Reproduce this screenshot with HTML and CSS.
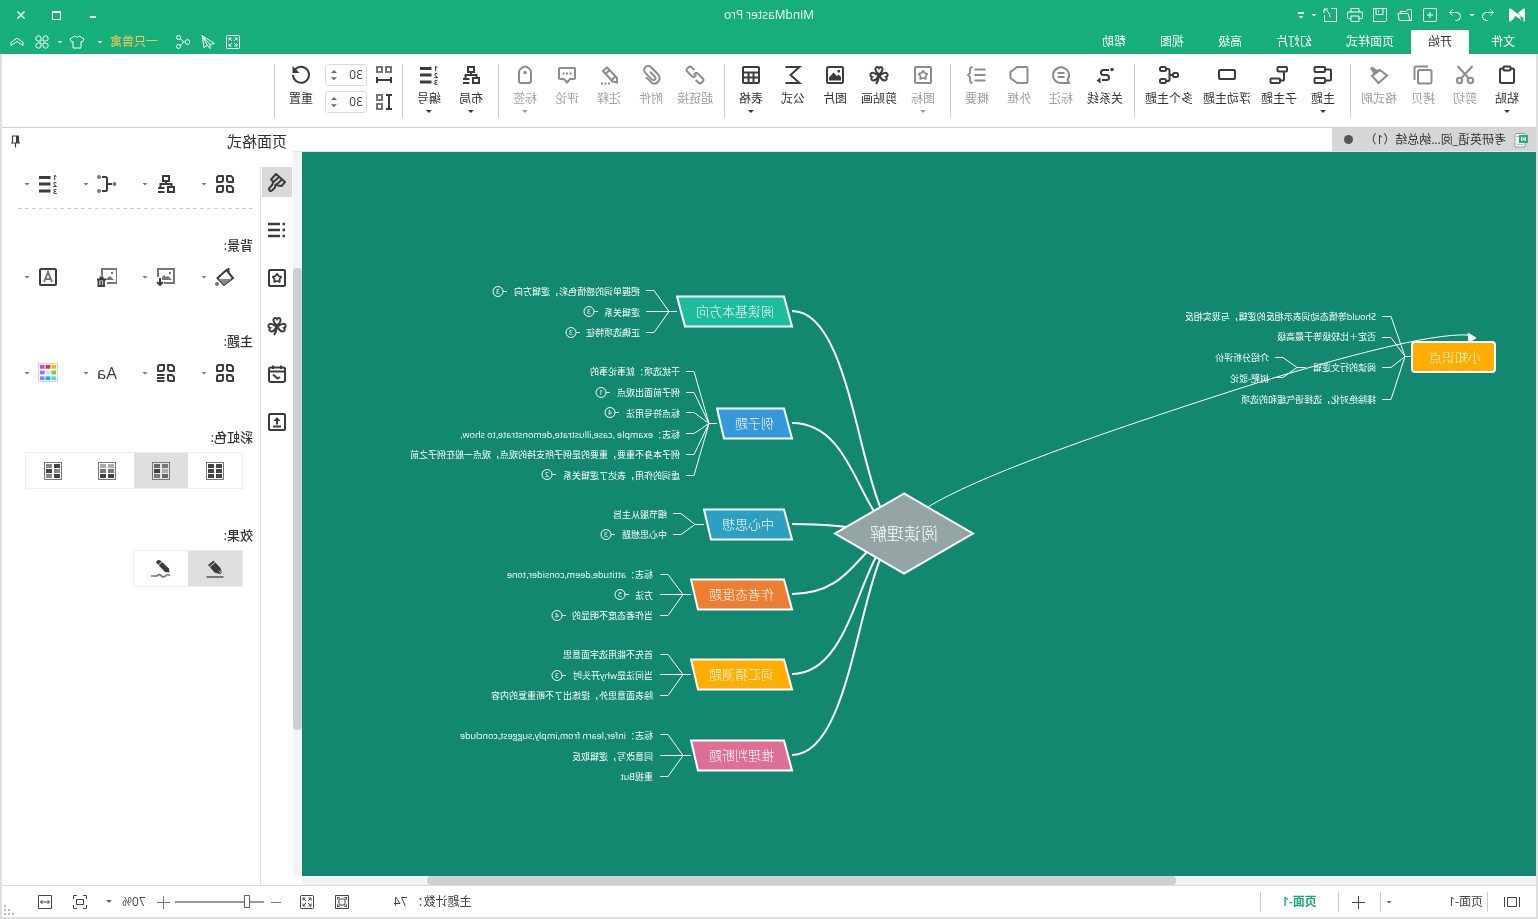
FILE: index.html
```html
<!DOCTYPE html>
<html lang="zh-CN">
<head>
<meta charset="utf-8">
<title>MindMaster Pro</title>
<link rel="stylesheet" href="styles.css">
</head>
<body>
<svg class="sprite" aria-hidden="true">
  <symbol id="logo" viewBox="0 0 16 14"><path d="M0 1.500Q0 0 1.500.6L7 5v0L4.500 7.500V11L1.500 13.600Q0 13.800 0 12.500zM16 1.500Q16 0 14.500.6L1.500 10v3.600L16 4zM10.500 7.500V10l4 3.600Q16 13.800 16 12.500V1.500z" fill="#fff"/></symbol>
  <symbol id="undo" viewBox="0 0 16 16"><path d="M5.500 2.500 2.500 5.500l3 3M2.500 5.500H9.500a4 4 0 0 1 0 8H8"/></symbol>
  <symbol id="redo" viewBox="0 0 16 16"><path d="M10.500 2.500l3 3-3 3M13.500 5.500H6.500a4 4 0 0 0 0 8H8"/></symbol>
  <symbol id="new" viewBox="0 0 16 16"><rect x="1.500" y="1.500" width="13" height="13" rx="1"/><path d="M8 5v6M5 8h6"/></symbol>
  <symbol id="open" viewBox="0 0 16 16"><path d="M1.500 13.500v-10a1 1 0 0 1 1-1h3l1.500 2h5a1 1 0 0 1 1 1v1M1.500 13.500h11.500a1 1 0 0 0 1-1L15 6.500H5L3 13"/></symbol>
  <symbol id="save" viewBox="0 0 16 16"><path d="M1.500 1.500h13v13h-12l-1-1zM5 2v5.500h7V2M9.500 3.500v2"/></symbol>
  <symbol id="print" viewBox="0 0 16 16"><path d="M4 5V1.500h8V5M4 11.500H1.500a1 1 0 0 1-1-1V6a1 1 0 0 1 1-1h13a1 1 0 0 1 1 1v4.500a1 1 0 0 1-1 1H12M4 9h8v5.500H4z"/></symbol>
  <symbol id="export" viewBox="0 0 16 16"><path d="M7 1.500H1.500v13h12V8M10 2l4 0v4M14 2C10 4 8.500 6 8 10"/></symbol>
  <symbol id="full" viewBox="0 0 16 16"><rect x="1.500" y="1.500" width="13" height="13" rx="1"/><path d="M4 6.500V4h2.500M4 4l3 3M9.500 4H12v2.500M12 4 9 7M4 9.500V12h2.500M4 12l3-3M12 9.500V12H9.500M12 12 9 9"/></symbol>
  <symbol id="send" viewBox="0 0 16 16"><path d="M14 1.500 1.500 9.500l4.500 1v4l2.500-3 3.500 2zM14 1.500 6 10.500M14 1.500 8.500 11.500"/></symbol>
  <symbol id="share" viewBox="0 0 16 16"><circle cx="3.500" cy="8" r="2.300"/><circle cx="12.500" cy="3.500" r="2"/><circle cx="12.500" cy="12.500" r="2"/><path d="M6 8h1l4-3.500M7 8l4 3.500"/></symbol>
  <symbol id="shirt" viewBox="0 0 16 16"><path d="M5.500 2 1 5l1.500 3 1.500-.5V14h8V7.500l1.500.5L15 5l-4.500-3Q8 4.500 5.500 2z"/></symbol>
  <symbol id="apps" viewBox="0 0 16 16"><path d="M7 7H4.200a2.600 2.600 0 1 1 2.800-2.800zM9 7h2.800A2.600 2.600 0 1 0 9 4.200zM7 9H4.200A2.600 2.600 0 1 0 7 11.800zM9 9h2.800A2.600 2.600 0 1 1 9 11.800z"/></symbol>
  <symbol id="up" viewBox="0 0 16 16"><path d="M2 8.500 8 4l6 4.500v3L8 7.500 2 11.500z"/></symbol>

  <symbol id="paste" viewBox="0 0 20 20"><rect x="3" y="3.500" width="14" height="14.500" rx="1.500"/><rect x="6.500" y="1.500" width="7" height="4" rx="1" fill="#fff"/></symbol>
  <symbol id="cut" viewBox="0 0 20 20"><path d="M2.500 1 13.500 13M17.500 1 6.500 13"/><circle cx="4.500" cy="15.500" r="2.700"/><circle cx="15.500" cy="15.500" r="2.700"/></symbol>
  <symbol id="copy" viewBox="0 0 20 20"><rect x="1.500" y="5" width="13.500" height="13.500" rx="1.500"/><path d="M5 1.500h12a1.500 1.500 0 0 1 1.500 1.500v12"/></symbol>
  <symbol id="brush" viewBox="0 0 20 20"><path d="M9 5 2 10.500 10.500 18 17 11z"/><path d="M8.500 6 18 12 15.500 8.500 19 3.500 17 1.500 12 5 9.500 4z" fill="currentColor" stroke="none"/></symbol>
  <symbol id="topic" viewBox="0 0 20 20"><rect x="8" y="2" width="10.500" height="5" rx="1"/><rect x="8" y="13" width="10.500" height="5" rx="1"/><path d="M8 4.500H3a1 1 0 0 0-1 1v9a1 1 0 0 0 1 1h5"/></symbol>
  <symbol id="sub" viewBox="0 0 20 20"><rect x="2" y="2" width="9.500" height="4.500" rx="1"/><rect x="9" y="13.500" width="9.500" height="4.500" rx="1"/><path d="M5 6.500v8a1 1 0 0 0 1 1h3"/></symbol>
  <symbol id="float" viewBox="0 0 20 20"><rect x="2" y="5" width="16" height="9" rx="1"/></symbol>
  <symbol id="multi" viewBox="0 0 20 20"><rect x="1" y="8" width="5" height="4" rx="1.500"/><rect x="13" y="2" width="6" height="4" rx="1.500"/><rect x="13" y="14" width="6" height="4" rx="1.500"/><path d="M6 10h4M13 4h-2a1.500 1.500 0 0 0-1.500 1.500v9A1.500 1.500 0 0 0 11 16h2"/></symbol>
  <symbol id="rel" viewBox="0 0 20 20"><path d="M6 5h5.500a2.500 2.500 0 0 1 0 5h-3a2.500 2.500 0 0 0 0 5H13"/><circle cx="3" cy="4.500" r="1.700" fill="currentColor" stroke="none"/><path d="M14.500 12.500 18.500 15.500l-4 3z" fill="currentColor" stroke="none"/></symbol>
  <symbol id="callout" viewBox="0 0 20 20"><path d="M10 18H2l1.500-3.200A8 7.800 0 1 1 10 18zM6.500 8h7M6.500 12h7"/></symbol>
  <symbol id="frame" viewBox="0 0 20 20"><path d="M1.500 3.500a1.500 1.500 0 0 1 1.500-1.500h9l6.500 5v6L12 18H3a1.500 1.500 0 0 1-1.500-1.500z"/></symbol>
  <symbol id="summary" viewBox="0 0 20 20"><path d="M1.500 4.500h11M1.500 10h11M1.500 15.500h11M14.500 2q2.500 0 2.500 2.500V8l2 2-2 2v3.500q0 2.500-2.500 2.500" stroke-width="1.800"/></symbol>
  <symbol id="mark" viewBox="0 0 20 20"><rect x="2" y="2" width="16" height="16" rx="1"/><path d="M10 5.800 11.600 8l2.600.9L12.600 11l.1 2.800L10 13l-2.700.8.1-2.800-1.600-2.100L8.400 8z" stroke-width="1.800" stroke-linejoin="round"/></symbol>
  <symbol id="clover" viewBox="0 0 20 20"><path d="M10 9.500C7 7 6 5.500 6.500 3.500 7 1.500 9.300 1.500 10 3c.7-1.500 3-1.500 3.500.5.500 2-.5 3.500-3.500 6zM9.500 10.500C8 14 6.500 15.500 4.500 15.500 2.500 15.500 1.500 13.500 3 12 1 11.500.8 9 2.500 8c2-1 4 .5 7 2.500zM10.500 10.500c1.500 3.500 3 5 5 5 2 0 3-2 1.500-3.500 2-.5 2.200-3 .5-4-2-1-4 .5-7 2.500zM10 10.500Q10.500 16 13 19"/></symbol>
  <symbol id="pic" viewBox="0 0 20 20"><rect x="2" y="2" width="16" height="16" rx="1.500"/><path d="M4 15.500v-3.500l2.500-2.500L8 11l3.500-3.500 4.500 5v3zM5 5h2.500v2.500H5z" fill="currentColor" stroke="none"/></symbol>
  <symbol id="sigma" viewBox="0 0 20 20"><path d="M17.500 2H3.500l9 8-9 8h14"/></symbol>
  <symbol id="table" viewBox="0 0 20 20"><rect x="2" y="2" width="16" height="16" rx="1"/><path d="M2 7.500h16M2 12.500h16M7.500 7.500V18M12.500 7.500V18"/></symbol>
  <symbol id="link" viewBox="0 0 20 20"><g transform="rotate(-45 10 10)"><path d="M6 13H2a2 2 0 0 1-2-2V9a2 2 0 0 1 2-2h7a2 2 0 0 1 2 2v2"/><path d="M14 7h4a2 2 0 0 1 2 2v2a2 2 0 0 1-2 2h-7a2 2 0 0 1-2-2V9"/></g></symbol>
  <symbol id="clip" viewBox="0 0 20 20"><path d="M8.500 7v7a2 2 0 0 0 4 0V4.500a4 4 0 0 0-8 0V14a5.500 5.500 0 0 0 10.500 2.500V8" transform="rotate(45 10 10)"/></symbol>
  <symbol id="pencil" viewBox="0 0 20 20"><path d="M2 17.500v-4.500L12 2.500l4 3.500L6.500 16.500zM9.500 5l4 4M4 12l3.500 3" /><path d="M9 18.500h10" stroke-dasharray="2 1.500"/></symbol>
  <symbol id="comment" viewBox="0 0 20 20"><path d="M3 3h14a1 1 0 0 1 1 1v9a1 1 0 0 1-1 1h-4l-3 3.500L7 14H3a1 1 0 0 1-1-1V4a1 1 0 0 1 1-1z"/><path d="M5.500 8.500h9" stroke-dasharray="2 1.500"/></symbol>
  <symbol id="tag" viewBox="0 0 20 20"><path d="M4 7q0-2 2-3.500L8 2.200Q10 1 12 2.200l2 1.300q2 1.500 2 3.500V16a2 2 0 0 1-2 2H6a2 2 0 0 1-2-2z"/><circle cx="10" cy="7.500" r="1.700" fill="currentColor" stroke="none"/></symbol>
  <symbol id="layout" viewBox="0 0 20 20"><rect x="7" y="2" width="6" height="5"/><path d="M10 7v3M4.500 13v-3h11v3M11.500 14H18M11.500 18H18"/><rect x="2" y="13" width="6" height="5"/></symbol>
  <symbol id="hspace" viewBox="0 0 20 20"><g stroke="#777"><rect x="3" y="2" width="5" height="5"/><rect x="12" y="2" width="5" height="5"/></g><path d="M2 15h16M3 12v6M17 12v6"/></symbol>
  <symbol id="vspace" viewBox="0 0 20 20"><path d="M5 3v14M2 3h6M2 17h6"/><g stroke="#777"><rect x="12" y="3" width="5" height="5"/><rect x="12" y="12" width="5" height="5"/></g></symbol>
  <symbol id="reset" viewBox="0 0 20 20"><path d="M16 4.500A8 8 0 1 0 18 10"/><path d="M18.500 1v7H11.500z" fill="currentColor" stroke="none"/></symbol>

  <symbol id="doc" viewBox="0 0 16 16"><path d="M4 1.500h9l1 1V15H4z" fill="#fff" stroke="#999"/><path d="M6 12.500h6M9 4.500h4" stroke="#bbb"/><rect x="1" y="3" width="9" height="8" fill="#1cb57e" stroke="none"/><path d="M3.500 9V5l4 4V5l-4 4" stroke="#fff" stroke-width="1"/></symbol>
  <symbol id="pin" viewBox="0 0 12 14"><path d="M2.500 2h6v7h-6zM1 9h9M5.500 9v4.500" stroke-width="1.200"/><path d="M2 2h3v7H2z" fill="currentColor" stroke="none"/></symbol>
  <symbol id="paint" viewBox="0 0 20 20"><path d="M11 2 2 10l3.500 4 3.500-.5 2.500-1 .5 3 3 3q1.500 1 2.500 0 1-1.500 0-2.500l-3-3.500-.5-3 2-2zM5 7.500l6 5.500M8 5l6.500 6" stroke-linejoin="round"/></symbol>
  <symbol id="list" viewBox="0 0 20 20"><path d="M7 4h12M7 10h12M7 16h12M2 4h2.500M2 10h2.500M2 16h2.500" stroke-width="2.600"/></symbol>
  <symbol id="cal" viewBox="0 0 20 20"><rect x="2" y="3.500" width="16" height="14.500" rx="2"/><path d="M2 7.500h16M6 1.500V5M14 1.500V5M7 13l2.500 1.500L14 10.500"/></symbol>
  <symbol id="upload" viewBox="0 0 20 20"><rect x="2" y="2" width="16" height="16" rx="1"/><path d="M10 12.500V7M6 14.500h8"/><path d="M6.500 9 10 5l3.500 4z" fill="currentColor" stroke="none"/></symbol>
  <symbol id="four" viewBox="0 0 20 20"><path d="M4 2h4v4a2 2 0 0 1-2 2H2V4zM12 2h4a2 2 0 0 1 2 2v4h-4a2 2 0 0 1-2-2zM4 12h4v4a2 2 0 0 1-2 2H2v-4zM12 12h4a2 2 0 0 1 2 2v4h-4a2 2 0 0 1-2-2z" stroke-linejoin="round"/></symbol>
  <symbol id="fourlist" viewBox="0 0 20 20"><path d="M4 2h4v4a2 2 0 0 1-2 2H2V4zM12 2h4a2 2 0 0 1 2 2v4h-4a2 2 0 0 1-2-2zM4 12h4v4a2 2 0 0 1-2 2H2v-4z" stroke-linejoin="round"/><path d="M11.500 12h7.500M11.500 15h7.500M11.500 18h7.500"/></symbol>
  <symbol id="conn" viewBox="0 0 20 20"><path d="M5 10h4.500M15 3h-3.500A1.500 1.500 0 0 0 10 4.500v11a1.500 1.500 0 0 0 1.500 1.500H15"/><g fill="#777" stroke="none"><circle cx="2.500" cy="10" r="2"/><circle cx="18" cy="3" r="2"/><circle cx="18" cy="17" r="2"/></g></symbol>
  <symbol id="fill" viewBox="0 0 20 20"><path d="M2 11 11 18l6.500-7L8.500 3z"/><path d="M3.500 12h13L11 18z" fill="#888" stroke="none"/><path d="M6.500 1v4"/><circle cx="18" cy="17" r="2" fill="#777" stroke="none"/></symbol>
  <symbol id="imgdown" viewBox="0 0 20 20"><g stroke="#777"><path d="M12 16H2V2h16v8"/><path d="M4 13l4-4 2 1 2-2 2 2v3zM5 5h2v2H5z" fill="#777" stroke="none"/></g><path d="M16 11v6M13 15l3 3 3-3"/></symbol>
  <symbol id="imgdel" viewBox="0 0 20 20"><g stroke="#777"><path d="M10 16H0V2h15v7"/><path d="M3 13l4-4 4 3v1zM4 5h2v2H4z" fill="#777" stroke="none"/></g><path d="M11 12.500h9M13.500 10.500h4M13 12.500V19h5.500v-6.500M15.700 14v4" stroke-width="1.800"/></symbol>
  <symbol id="abox" viewBox="0 0 20 20"><rect x="2" y="2" width="16" height="16" rx="1"/><path d="M6 15l4-10 4 10M7.500 12h5" stroke="#777"/></symbol>
  <symbol id="palette" viewBox="0 0 21 21"><rect x=".5" y=".5" width="20" height="19" fill="#fff" stroke="#c9cfe6" stroke-width="1"/><g stroke="none"><path fill="#f0bf00" d="M2 2h5v4H2z"/><path fill="#dd2f55" d="M8 2h5v4H8z"/><path fill="#c052d0" d="M14 2h5v4h-5z"/><path fill="#76cf3c" d="M2 8h5v4H2z"/><path fill="#ddd" d="M8 8h5v4H8z"/><path fill="#9578ee" d="M14 8h5v4h-5z"/><path fill="#68ccdc" d="M2 14h5v4H2z"/><path fill="#00b8f5" d="M8 14h5v4H8z"/><path fill="#7d89f5" d="M14 14h5v4h-5z"/></g></symbol>
  <symbol id="rb1" viewBox="0 0 18 18"><rect x=".5" y=".5" width="17" height="17" fill="#fff" stroke="#777" stroke-width="1"/><path fill="#444" stroke="none" d="M2 2h6v4H2zM10 2h6v4h-6zM2 7h6v4H2zM10 7h6v4h-6zM2 12h6v4H2zM10 12h6v4h-6z"/></symbol>
  <symbol id="rb2" viewBox="0 0 18 18"><rect x=".5" y=".5" width="17" height="17" fill="#e4e4e4" stroke="#777" stroke-width="1"/><g stroke="none"><path fill="#777" d="M2 2h6v4H2zM10 12h6v4h-6z"/><path fill="#666" d="M10 2h6v4h-6zM2 12h6v4H2z"/><path fill="#aaa" d="M2 7h6v4H2z"/><path fill="#444" d="M10 7h6v4h-6z"/></g></symbol>
  <symbol id="rb3" viewBox="0 0 18 18"><rect x=".5" y=".5" width="17" height="17" fill="#fff" stroke="#777" stroke-width="1"/><g stroke="none"><path fill="#aaa" d="M2 2h6v4H2zM10 2h6v4h-6z"/><path fill="#777" d="M2 7h6v4H2zM10 7h6v4h-6z"/><path fill="#444" d="M2 12h6v4H2zM10 12h6v4h-6z"/></g></symbol>
  <symbol id="rb4" viewBox="0 0 18 18"><rect x=".5" y=".5" width="17" height="17" fill="#fff" stroke="#777" stroke-width="1"/><g stroke="none"><path fill="#444" d="M2 2h6v4H2zM10 7h6v4h-6zM2 12h6v4H2z"/><path fill="#888" d="M10 2h6v4h-6zM2 7h6v4H2zM10 12h6v4h-6z"/></g></symbol>
  <symbol id="pen1" viewBox="0 0 20 20"><path d="M1.500 18h17" stroke="#777"/><path d="M3 14.500 4.500 9l7-7.500 5.500 4.500-6.500 7.500-5.500 1.500z" fill="currentColor" stroke="none"/><path d="M9.500 3l6 5M3 15l3-3.500" stroke="#ddd" stroke-width="1"/></symbol>
  <symbol id="pen2" viewBox="0 0 20 20"><path d="M1 17q2-3 4.500 0 3 2 4.500-.500 2-2 4 .500H20" stroke="#777" stroke-width="1.700"/><path d="M1.500 13.500 2 9.500 10.500 1.500q3.500-1.500 4.500 2L6 13z" fill="currentColor" stroke="none"/><path d="M9 2.500l4.500 4.500" stroke="#fff" stroke-width="1"/></symbol>

  <symbol id="pages" viewBox="0 0 16 16"><path d="M.5 3v10M15.500 3v10M3.500 3.500h9v9h-9z"/></symbol>
  <symbol id="plus" viewBox="0 0 14 14"><path d="M7.500 1v13M1 7.500h13"/></symbol>
  <symbol id="minus" viewBox="0 0 14 14"><path d="M2 7.500h10"/></symbol>
  <symbol id="fitpage" viewBox="0 0 16 16"><path d="M1.500 1.500h13v13h-13zM5 5h6v6H5zM3.500 5.500v-2h2M10.500 3.500h2v2M12.500 10.500v2h-2M5.500 12.500h-2v-2"/></symbol>
  <symbol id="focus" viewBox="0 0 16 16"><path d="M1.500 5V1.500H5M11 1.500h3.500V5M14.500 11v3.500H11M5 14.500H1.500V11M4.500 5.500h7v5h-7z"/></symbol>
  <symbol id="fitw" viewBox="0 0 16 16"><path d="M1.500 1.500h13v13h-13zM3.500 8h9M5.500 6l-2 2 2 2M10.500 6l2 2-2 2"/></symbol>
</svg>

<div class="app">
  <header class="header">
    <div class="titlebar">
      <div class="quick">
        <svg class="logo"><use href="#logo"/></svg>
        <button class="qbtn" aria-label="撤销"><svg class="i16"><use href="#undo"/></svg></button>
        <button class="cbtn" aria-label="撤销列表"><i class="caret"></i></button>
        <button class="qbtn" aria-label="重做"><svg class="i16"><use href="#redo"/></svg></button>
        <button class="qbtn" aria-label="新建"><svg class="i16"><use href="#new"/></svg></button>
        <button class="qbtn" aria-label="打开"><svg class="i16"><use href="#open"/></svg></button>
        <button class="qbtn" aria-label="保存"><svg class="i16"><use href="#save"/></svg></button>
        <button class="qbtn" aria-label="打印"><svg class="i16"><use href="#print"/></svg></button>
        <button class="qbtn" aria-label="导出"><svg class="i16"><use href="#export"/></svg></button>
        <button class="cbtn" aria-label="导出选项"><i class="caret"></i></button>
        <button class="custom" aria-label="自定义"><i class="bar"></i><i class="caret"></i></button>
      </div>
      <h1 class="title">MindMaster Pro</h1>
      <div class="winctl">
        <button aria-label="最小化"><i class="min"></i></button>
        <button aria-label="最大化"><i class="max"></i></button>
        <button aria-label="关闭"><svg class="i10" viewBox="0 0 10 10"><path d="M1.500 1.500l7 7M8.500 1.500l-7 7" stroke-width="1.500"/></svg></button>
      </div>
    </div>
    <div class="menubar">
      <nav class="tabs">
        <button class="tab file">文件</button><button class="tab active">开始</button><button class="tab">页面样式</button><button class="tab">幻灯片</button><button class="tab">高级</button><button class="tab">视图</button><button class="tab">帮助</button>
      </nav>
      <div class="account">
        <button class="qbtn" aria-label="全屏"><svg class="i16"><use href="#full"/></svg></button>
        <button class="qbtn" aria-label="发送"><svg class="i16"><use href="#send"/></svg></button>
        <button class="qbtn" aria-label="分享"><svg class="i16"><use href="#share"/></svg></button>
        <button class="user">一只兽禽</button>
        <button class="cbtn wide" aria-label="账户"><i class="caret"></i></button>
        <button class="qbtn" aria-label="皮肤"><svg class="i16"><use href="#shirt"/></svg></button>
        <button class="cbtn mid" aria-label="皮肤选项"><i class="caret"></i></button>
        <button class="qbtn" aria-label="应用"><svg class="i16"><use href="#apps"/></svg></button>
        <button class="qbtn" aria-label="收起"><svg class="i16"><use href="#up"/></svg></button>
      </div>
    </div>
  </header>

  <div class="frame">
    <section class="ribbon">
      <div class="group">
        <button class="tool"><svg><use href="#paste"/></svg><span>粘贴</span><i class="caret"></i></button>
        <button class="tool off"><svg><use href="#cut"/></svg><span>剪切</span></button>
        <button class="tool off"><svg><use href="#copy"/></svg><span>拷贝</span></button>
        <button class="tool off"><svg><use href="#brush"/></svg><span>格式刷</span></button>
      </div>
      <div class="group">
        <button class="tool"><svg><use href="#topic"/></svg><span>主题</span><i class="caret"></i></button>
        <button class="tool"><svg><use href="#sub"/></svg><span>子主题</span></button>
        <button class="tool"><svg><use href="#float"/></svg><span>浮动主题</span></button>
        <button class="tool"><svg><use href="#multi"/></svg><span>多个主题</span></button>
      </div>
      <div class="group">
        <button class="tool"><svg><use href="#rel"/></svg><span>关系线</span></button>
        <button class="tool off"><svg><use href="#callout"/></svg><span>标注</span></button>
        <button class="tool off"><svg><use href="#frame"/></svg><span>外框</span></button>
        <button class="tool off"><svg><use href="#summary"/></svg><span>概要</span></button>
      </div>
      <div class="group">
        <button class="tool off"><svg><use href="#mark"/></svg><span>图标</span><i class="caret"></i></button>
        <button class="tool"><svg><use href="#clover"/></svg><span>剪贴画</span></button>
        <button class="tool"><svg><use href="#pic"/></svg><span>图片</span></button>
        <button class="tool"><svg><use href="#sigma"/></svg><span>公式</span></button>
        <button class="tool"><svg><use href="#table"/></svg><span>表格</span><i class="caret"></i></button>
      </div>
      <div class="group">
        <button class="tool off"><svg><use href="#link"/></svg><span>超链接</span></button>
        <button class="tool off"><svg><use href="#clip"/></svg><span>附件</span></button>
        <button class="tool off"><svg><use href="#pencil"/></svg><span>注释</span></button>
        <button class="tool off"><svg><use href="#comment"/></svg><span>评论</span></button>
        <button class="tool off"><svg><use href="#tag"/></svg><span>标签</span><i class="caret"></i></button>
      </div>
      <div class="group">
        <button class="tool"><svg><use href="#layout"/></svg><span>布局</span><i class="caret"></i></button>
        <button class="tool"><svg class="number" viewBox="0 0 20 20"><path d="M7.500 3.500H19M7.500 10H19M7.500 17H19" stroke-width="3"/><text x="1" y="6">1</text><text x="1" y="13">2</text><text x="1" y="20">3</text></svg><span>编号</span><i class="caret"></i></button>
      </div>
      <div class="group">
        <div class="spacing">
          <label for="hs"><svg><use href="#hspace"/></svg></label>
          <div class="spin"><input id="hs" type="text" value="30" aria-label="水平间距"><span class="arrows"><button aria-label="增加"><i class="caret flip"></i></button><button aria-label="减少"><i class="caret"></i></button></span></div>
          <label for="vs"><svg><use href="#vspace"/></svg></label>
          <div class="spin"><input id="vs" type="text" value="30" aria-label="垂直间距"><span class="arrows"><button aria-label="增加"><i class="caret flip"></i></button><button aria-label="减少"><i class="caret"></i></button></span></div>
        </div>
        <button class="tool"><svg><use href="#reset"/></svg><span>重置</span></button>
      </div>
    </section>

    <main class="work">
      <section class="editor">
        <div class="docs">
          <button class="doc"><svg class="i16"><use href="#doc"/></svg><span>考研英语_阅...纳总结（1）</span><i class="dot"></i></button>
        </div>
        <div class="canvas-row">
          <div class="canvas">
            <svg class="map" aria-label="阅读理解">
              <g class="curve">
                <path d="M632 381C677 381 677 159 744 159"/>
                <path d="M632 381C677 381 677 271 744 271"/>
                <path d="M632 381C677 381 677 372 744 372"/>
                <path d="M632 381C677 381 677 442 744 442"/>
                <path d="M632 381C677 381 677 522 744 522"/>
                <path d="M632 381C677 381 677 603 744 603"/>
              </g>
              <g class="wire">
                <path d="M859 159.500H890M890 138.500H882L867 159.500 882 180.500H890"/>
                <path d="M819 271.500H827L842 219.500H850M827 271.500 842 240.500H850M827 271.500 842 260.500H850M827 271.500 842 281.500H850M827 271.500 842 302.500H850M827 271.500 842 323.500H850"/>
                <path d="M832 372.500H841L855 361.500H863M841 372.500 855 382.500H863"/>
                <path d="M845 442.500H876M876 422.500H868L853 442.500 868 463.500H876"/>
                <path d="M845 522.500H876M876 502.500H868L853 522.500 868 543.500H876"/>
                <path d="M845 603.500H876M876 582.500H868L853 603.500 868 624.500H876"/>
                <path d="M124 204.500H131L145 164.500H154M131 204.500 145 185.500H154M131 204.500 145 215.500H154M131 204.500 145 247.500H154"/>
                <path d="M230 215.500H239L253 205.500H261M239 215.500 253 225.500H261"/>
                <path d="M1029 139.500h4M938 159.500h4M956 180.500h4M926 240.500h4M917 260.500h4M980 322.500h4M921 382.500h4M907 442.500h4M970 463.500h4M970 523.500h4"/>
              </g>
              <g class="shape">
                <path fill="#95a5a6" d="M632 341.500 701 381.500 632 421.500 563 381.500z"/>
                <path fill="#1cbc9c" d="M752 144.500H859L851 174.500H744z"/>
                <path fill="#3498db" d="M752 256.500H819L812 286.500H744z"/>
                <path fill="#2ba0c0" d="M752 357.500H832L825 387.500H744z"/>
                <path fill="#ed7d31" d="M752 427.500H845L838 457.500H744z"/>
                <path fill="#ffae00" d="M752 507.500H845L838 537.500H744z"/>
                <path fill="#dd6f97" d="M752 588.500H845L838 618.500H744z"/>
                <rect fill="#ffae00" x="41" y="190" width="83" height="30" rx="3"/>
              </g>
              <g class="wire">
                <path d="M608 355C561 326 446 284 276 230 196 206 106 181 68 183"/>
                <path class="solid" d="M68 181 60 186 67 190z"/>
              </g>
              <text class="root" x="632" y="388">阅读理解</text>
              <g class="main">
                <text x="762" y="164">阅读基本方向</text>
                <text x="762" y="276">例子题</text>
                <text x="762" y="377">中心思想</text>
                <text x="762" y="447">作者态度题</text>
                <text x="762" y="527">词汇猜测题</text>
                <text x="762" y="608">推理判断题</text>
                <text x="55" y="210">小知识点</text>
              </g>
              <g class="leaf">
                <text x="896" y="143">把握单词的感情色彩，逻辑方向</text>
                <text x="896" y="164">逻辑关系</text>
                <text x="896" y="184">正确选项特征</text>
                <text x="856" y="223">干扰选项：就事论事的</text>
                <text x="856" y="244">例子前面出观点</text>
                <text x="856" y="265">标点符号用法</text>
                <text x="856" y="286">标志：example ,case,illustrate,demonstrate,to show,</text>
                <text x="856" y="306">例子本身不重要，重要的是例子所支持的观点，观点一般在例子之前</text>
                <text x="856" y="327">虚词的作用，表达了逻辑关系</text>
                <text x="869" y="366">细节服从主旨</text>
                <text x="869" y="386">中心思想题</text>
                <text x="883" y="426">标志：attitude,deem,consider,tone</text>
                <text x="883" y="447">方法</text>
                <text x="883" y="467">当作者态度不明显的</text>
                <text x="883" y="506">首先不能用选字面意思</text>
                <text x="883" y="527">当问法是why开头时</text>
                <text x="883" y="547">除表面意思外，提炼出了不断重复的内容</text>
                <text x="883" y="587">标志：infer,learn from,imply,suggest,conclude</text>
                <text x="883" y="608">同意改写，逻辑取反</text>
                <text x="883" y="628">重视But</text>
                <text x="160" y="168">Should等情态动词表示相反的逻辑，与现实相反</text>
                <text x="160" y="188">否定＋比较级等于最高级</text>
                <text x="160" y="219">阅读的行文逻辑</text>
                <text x="160" y="251">排除绝对化，选择语气缓和的选项</text>
                <text x="267" y="209">介绍分析评价</text>
                <text x="267" y="230">树靶-驳论</text>
              </g>
              <g class="badge">
                <circle cx="1038" cy="139.500" r="5"/><text x="1038" y="142">3</text>
                <circle cx="947" cy="159.500" r="5"/><text x="947" y="162">3</text>
                <circle cx="965" cy="180.500" r="5"/><text x="965" y="183">3</text>
                <circle cx="935" cy="240.500" r="5"/><text x="935" y="243">1</text>
                <circle cx="926" cy="260.500" r="5"/><text x="926" y="263">4</text>
                <circle cx="989" cy="322.500" r="5"/><text x="989" y="325">2</text>
                <circle cx="930" cy="382.500" r="5"/><text x="930" y="385">3</text>
                <circle cx="916" cy="442.500" r="5"/><text x="916" y="445">5</text>
                <circle cx="979" cy="463.500" r="5"/><text x="979" y="466">4</text>
                <circle cx="979" cy="523.500" r="5"/><text x="979" y="526">3</text>
              </g>
            </svg>
          </div>
          <div class="vscroll"><div class="vthumb"></div></div>
        </div>
        <div class="hscroll"><div class="hthumb"></div></div>
      </section>

      <aside class="panel">
        <div class="panel-head"><h2>页面格式</h2><button aria-label="固定"><svg class="pin"><use href="#pin"/></svg></button></div>
        <div class="panel-body">
          <nav class="strip">
            <button class="on" aria-label="页面格式"><svg><use href="#paint"/></svg></button>
            <button aria-label="大纲"><svg><use href="#list"/></svg></button>
            <button aria-label="图标"><svg><use href="#mark"/></svg></button>
            <button aria-label="剪贴画"><svg><use href="#clover"/></svg></button>
            <button aria-label="任务"><svg><use href="#cal"/></svg></button>
            <button aria-label="导出"><svg><use href="#upload"/></svg></button>
          </nav>
          <div class="props">
            <div class="prow first">
              <button aria-label="布局"><svg><use href="#four"/></svg><i class="caret"></i></button>
              <button aria-label="结构"><svg><use href="#layout"/></svg><i class="caret"></i></button>
              <button aria-label="连接线"><svg><use href="#conn"/></svg><i class="caret"></i></button>
              <button aria-label="编号"><svg class="number" viewBox="0 0 20 20"><path d="M7.500 3.500H19M7.500 10H19M7.500 17H19" stroke-width="3"/><text x="1" y="6">1</text><text x="1" y="13">2</text><text x="1" y="20">3</text></svg><i class="caret"></i></button>
            </div>
            <h3>背景:</h3>
            <div class="prow">
              <button aria-label="填充"><svg><use href="#fill"/></svg><i class="caret"></i></button>
              <button aria-label="背景图片"><svg><use href="#imgdown"/></svg><i class="caret"></i></button>
              <button aria-label="删除图片"><svg class="wide"><use href="#imgdel"/></svg></button>
              <button aria-label="水印"><svg><use href="#abox"/></svg><i class="caret"></i></button>
            </div>
            <h3>主题:</h3>
            <div class="prow">
              <button aria-label="主题"><svg><use href="#four"/></svg><i class="caret"></i></button>
              <button aria-label="主题样式"><svg><use href="#fourlist"/></svg><i class="caret"></i></button>
              <button aria-label="字体"><span class="aa">Aa</span><i class="caret"></i></button>
              <button aria-label="颜色"><svg><use href="#palette"/></svg><i class="caret"></i></button>
            </div>
            <h3>彩虹色:</h3>
            <div class="seg">
              <button aria-label="单色"><svg><use href="#rb1"/></svg></button>
              <button class="on" aria-label="彩虹一"><svg><use href="#rb2"/></svg></button>
              <button aria-label="彩虹二"><svg><use href="#rb3"/></svg></button>
              <button aria-label="彩虹三"><svg><use href="#rb4"/></svg></button>
            </div>
            <h3 class="last">效果:</h3>
            <div class="seg">
              <button class="on" aria-label="常规"><svg class="pen"><use href="#pen1"/></svg></button>
              <button aria-label="手绘"><svg class="pen"><use href="#pen2"/></svg></button>
            </div>
          </div>
        </div>
      </aside>
    </main>

    <footer class="status">
      <button class="sbtn pages" aria-label="页面列表"><svg class="i16"><use href="#pages"/></svg></button>
      <div class="pagesel"><select aria-label="页面"><option>页面-1</option></select><i class="caret"></i></div>
      <button class="sbtn add" aria-label="添加页面"><svg class="i14"><use href="#plus"/></svg></button>
      <button class="pagetab">页面-1</button>
      <div class="right">
        <span class="count"><span>主题计数：</span><span>74</span></span>
        <button class="sbtn" aria-label="适合页面"><svg class="i16"><use href="#fitpage"/></svg></button>
        <button class="sbtn" aria-label="全屏"><svg class="i16"><use href="#full"/></svg></button>
        <button class="sbtn zoom out" aria-label="缩小"><svg class="i14"><use href="#minus"/></svg></button>
        <input class="slider" type="range" min="0" max="100" value="16" aria-label="缩放">
        <button class="sbtn zoom" aria-label="放大"><svg class="i14"><use href="#plus"/></svg></button>
        <button class="percent">70%<i class="caret"></i></button>
        <button class="sbtn" aria-label="居中"><svg class="i16"><use href="#focus"/></svg></button>
        <button class="sbtn" aria-label="适合宽度"><svg class="i16"><use href="#fitw"/></svg></button>
      </div>
      <svg class="grip" viewBox="0 0 10 10"><path d="M8 0h2v2H8zM8 4h2v2H8zM8 8h2v2H8zM4 4h2v2H4zM4 8h2v2H4zM0 8h2v2H0z"/></svg>
    </footer>
  </div>
</div>
</body>
</html>
```
FILE: styles.css
```css
* { box-sizing: border-box; }
html, body { height: 100%; }
body {
  margin: 0;
  overflow: hidden;
  color: #333;
  font-family: "Open Sans", "Noto Sans CJK SC", sans-serif;
  font-size: 12px;
  line-height: 16px;
}
button, input, select { font: inherit; color: inherit; }
button {
  display: flex;
  align-items: center;
  justify-content: center;
  margin: 0;
  padding: 0;
  border: 0;
  background: none;
  white-space: nowrap;
}
h1, h2, h3 { margin: 0; font-weight: 400; }
svg { display: block; flex: none; width: 20px; height: 20px; fill: none; stroke: currentColor; stroke-width: 2; }
.sprite { position: absolute; width: 0; height: 0; }
.i16 { width: 16px; height: 16px; stroke-width: 1; }
.i14 { width: 14px; height: 14px; stroke-width: 1; }
.i10 { width: 10px; height: 10px; }
.number { overflow: visible; }
.number text { fill: currentColor; stroke: none; font-size: 7px; font-weight: 700; }
.caret {
  flex: none;
  width: 6px;
  height: 3px;
  background: currentColor;
  clip-path: polygon(0 0, 100% 0, 50% 100%);
}
.flip { transform: rotate(180deg); }

/* The whole window is shown mirrored. */
.app { display: flex; flex-direction: column; height: 100%; transform: scaleX(-1); background: #fff; }

/* Header */
.header { background: #16ae79; color: #fff; }
.titlebar { display: grid; grid-template-columns: 1fr auto 1fr; align-items: center; height: 30px; }
.quick { display: flex; align-items: center; padding-left: 13px; }
.logo { width: 16px; height: 14px; margin-right: 8px; stroke: none; }
.qbtn { width: 25px; height: 24px; }
.cbtn { width: 8px; height: 24px; }
.custom { flex-direction: column; gap: 2px; width: 18px; height: 24px; }
.bar { width: 6px; height: 2px; background: #fff; }
.title { font-size: 12px; }
.winctl { display: flex; justify-content: flex-end; padding-right: 3px; }
.winctl button { width: 36px; height: 28px; }
.min { width: 6px; height: 2px; margin-top: 4px; background: #fff; }
.max { width: 9px; height: 9px; border: 1px solid #fff; border-top-width: 2px; }
.menubar { display: flex; justify-content: space-between; height: 24px; }
.tabs { display: flex; }
.tab { padding: 0 17px; }
.tab.file { margin-left: 6px; margin-right: 5px; }
.tab.active { background: #fff; color: #333; }
.account { display: flex; align-items: center; padding-right: 5px; }
.user { margin-left: 12px; color: #f9c95a; }
.cbtn.mid { width: 10px; }
.cbtn.wide { width: 20px; }

/* Window frame */
.frame { display: flex; flex: 1; flex-direction: column; min-height: 0; border: solid #dedede; border-width: 0 2px 2px; }

/* Ribbon */
.ribbon { display: flex; flex: none; height: 74px; padding: 10px 0 9px 2px; border-bottom: 1px solid #d0d0d0; color: #3c3c3c; }
.group { display: flex; padding: 0 5px 0 6px; border-right: 1px solid #d0d0d0; }
.tool { flex-direction: column; justify-content: flex-start; padding: 1px 5px 0; min-width: 42px; }
.tool span { margin-top: 6px; color: #333; }
.tool .caret { margin-top: 3px; }
.tool.off, .tool.off span { color: #a0a0a0; }
.tool.off svg { color: #8c8c8c; }
.spacing { display: grid; grid-template-columns: 20px 42px; grid-auto-rows: 22px; gap: 5px 7px; align-items: center; align-content: start; padding: 0 3px 0 2px; }
.spin { display: flex; height: 22px; padding: 0 5px 0 3px; border: 1px solid #ddd; border-radius: 3px; }
.spin input { flex: 1; min-width: 0; padding: 0; border: 0; outline: 0; background: none; }
.arrows { display: flex; flex-direction: column; justify-content: space-evenly; color: #666; }

/* Work area */
.work { display: flex; flex: 1; min-height: 0; }
.editor { display: flex; flex: 1; flex-direction: column; min-width: 0; }
.docs { display: flex; flex: none; height: 24px; border-bottom: 1px solid #e2e2e2; }
.doc { gap: 7px; width: 204px; padding: 0 12px 0 7px; background: #d6d6d6; justify-content: flex-start; }
.dot { width: 9px; height: 9px; margin-left: auto; border-radius: 50%; background: #555; }
.canvas-row { display: flex; flex: 1; min-height: 0; }
.canvas { flex: 1; min-width: 0; overflow: hidden; background: #138871; }
.map { width: 100%; height: 100%; stroke: none; }
.curve { fill: none; stroke: #fff; stroke-width: 2; }
.wire { fill: none; stroke: #fff; stroke-width: 1; }
.solid { fill: #fff; }
.shape { stroke: #fff; stroke-width: 2; }
.map text { fill: #fff; stroke: none; }
.root { font-size: 17px; text-anchor: middle; font-weight: 300; }
.main { font-size: 13px; font-weight: 300; }
.leaf { font-size: 9px; }
.badge { fill: none; stroke: #fff; stroke-width: 1; font-size: 7px; text-anchor: middle; }
.vscroll { width: 9px; background: #f4f4f4; padding-top: 116px; }
.vthumb { height: 76%; max-height: 463px; border-radius: 4px; background: #cfcfcf; }
.hscroll { flex: none; height: 9px; margin-right: 9px; background: #f4f4f4; padding-left: 360px; }
.hthumb { width: 86%; max-width: 749px; height: 9px; border-radius: 4px; background: #cfcfcf; }

/* Side panel */
.panel { display: flex; flex: none; flex-direction: column; width: 291px; color: #3c3c3c; }
.panel-head { display: flex; align-items: center; justify-content: space-between; height: 39px; padding: 0 7px 14px 6px; }
.panel-head h2 { font-size: 15px; line-height: 20px; color: #333; }
.pin { width: 12px; height: 14px; }
.panel-body { display: flex; flex: 1; min-height: 0; }
.strip { display: flex; flex: none; flex-direction: column; gap: 18px; width: 33px; padding-left: 1px; border-right: 1px solid #ddd; }
.strip button { width: 30px; height: 30px; }
.strip .on { background: #d9d9d9; }
.props { flex: 1; min-width: 0; padding: 0 16px 0 7px; }
.prow { display: grid; grid-template-columns: repeat(4, 59px); padding-left: 18px; margin-top: 5px; }
.prow button { justify-content: flex-start; gap: 8px; height: 34px; }
.prow .caret { color: #777; }
.prow.first {
  height: 42px;
  margin-top: 0;
  background: repeating-linear-gradient(90deg, #d0d0d0 0 4px, transparent 4px 7px) left bottom / 100% 1px no-repeat;
}
.aa { width: 20px; font-size: 17px; font-weight: 500; }
.props h3 { height: 20px; margin-top: 37px; font-size: 13px; font-weight: 500; line-height: 20px; color: #333; }
.props .first + h3 { margin-top: 26px; }
.props h3.last { margin-top: 36px; }
.seg { display: flex; width: max-content; margin: 5px 0 0 10px; border: 1px solid #eee; }
.seg button { width: 54px; height: 35px; }
.seg .on { background: #dfdfdf; }
.seg svg { width: 18px; height: 18px; }
.seg .pen { width: 20px; height: 20px; }

/* Status bar */
.status { position: relative; display: flex; flex: none; height: 32px; border-top: 1px solid #ddd; color: #444; }
.pages, .add, .pagetab, .pagesel { height: 20px; margin-top: 6px; border-right: 1px solid #ccc; }
.sbtn { width: 35px; }
.sbtn.pages { width: 49px; }
.sbtn.add { width: 42px; }
.sbtn.zoom { width: 20px; color: #777; }
.sbtn.out { margin-left: 4px; }
.pagesel { display: flex; align-items: center; width: 107px; padding: 0 5px 0 4px; }
.pagesel select { flex: 1; padding: 0; border: 0; background: none; appearance: none; }
.pagesel .caret, .percent .caret { color: #666; }
.pagetab { width: 78px; color: #16a875; font-weight: 600; }
.right { display: flex; margin-left: auto; padding-right: 26px; align-items: center; }
.count { display: flex; gap: 4px; margin-right: 34px; }
.slider { width: 89px; height: 16px; margin: 0 1px 0 2px; appearance: none; background: linear-gradient(#999, #999) center / 100% 2px no-repeat; }
.slider::-webkit-slider-thumb { appearance: none; width: 6px; height: 13px; border: 1px solid #666; background: #fff; }
.percent { gap: 10px; margin: 0 8px; }
.grip { position: absolute; right: 2px; bottom: 2px; width: 10px; height: 10px; fill: #bbb; stroke: none; }
```
